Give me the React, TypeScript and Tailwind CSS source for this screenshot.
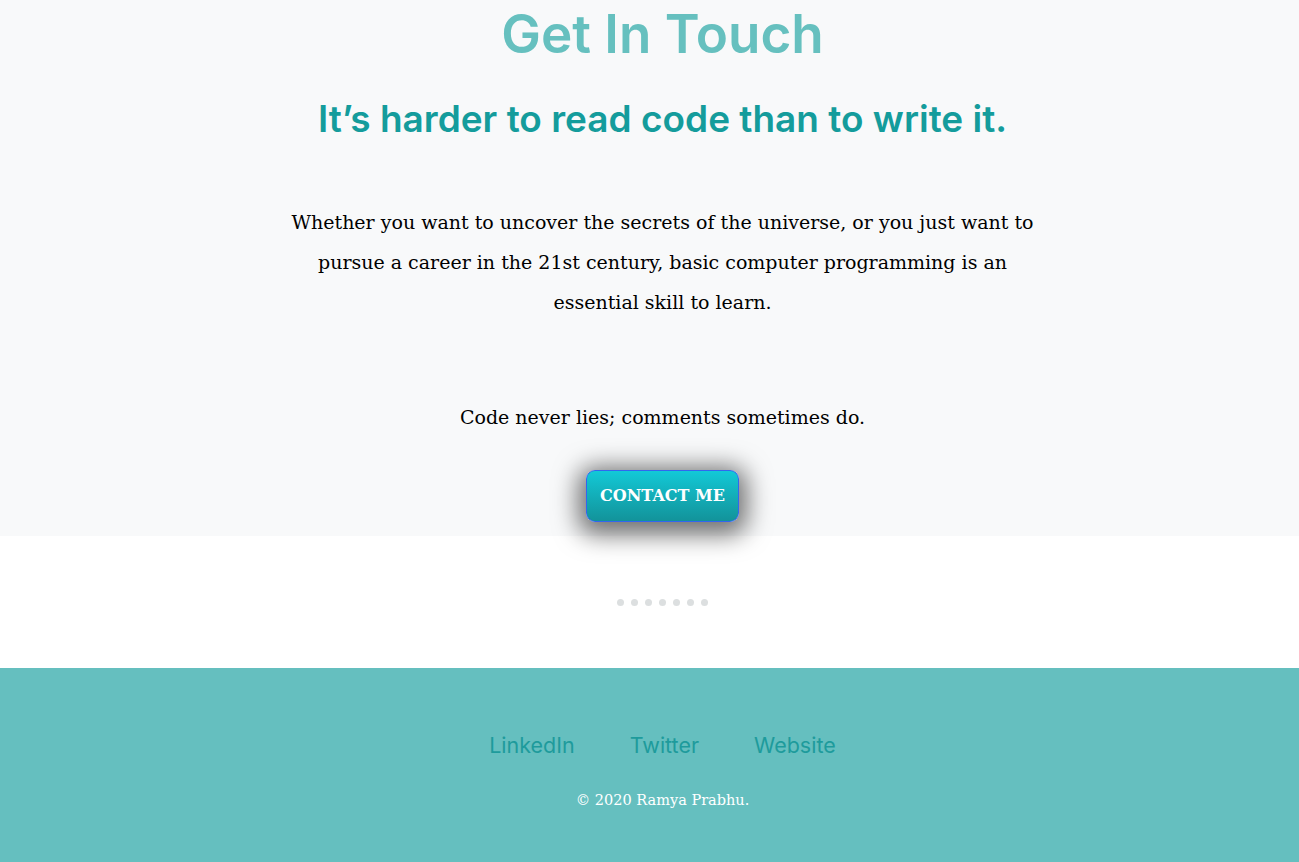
import React from "react";

export default function App() {
  return (
    <div className="w-full min-h-[862px] bg-white">
      <section className="bg-[#f8f9fa] h-[536px] flex flex-col items-center pl-[26px]">
        <h1 className="mt-[2px] font-['Inter','Open_Sans',sans-serif] text-[53px] leading-[64px] font-semibold text-[#66c0bf]">
          Get In Touch
        </h1>
        <h2 className="mt-[31px] font-['Inter','Open_Sans',sans-serif] text-[37px] leading-[44px] font-semibold text-[#149c9c]">
          It’s harder to read code than to write it.
        </h2>
        <p className="mt-[61px] w-[780px] text-center font-['DejaVu_Serif','Liberation_Serif',serif] text-[19px] leading-[40px] text-black">
          Whether you want to uncover the secrets of the universe, or you just want to pursue a career in the 21st century, basic computer programming is an essential skill to learn.
        </p>
        <p className="mt-[75px] text-center font-['DejaVu_Serif','Liberation_Serif',serif] text-[19px] leading-[40px] text-black">
          Code never lies; comments sometimes do.
        </p>
        <button className="mt-[33px] w-[153px] h-[52px] rounded-[9px] border border-[#3366ee] bg-gradient-to-b from-[#12c9d7] to-[#12939a] font-['DejaVu_Serif','Liberation_Serif',serif] text-white text-[16px] font-bold shadow-[0_5px_24px_8px_rgba(0,0,0,0.55)]">
          CONTACT ME
        </button>
      </section>
      <section className="h-[132px] flex items-center justify-center gap-[7px] pl-[26px]">
        {Array.from({ length: 7 }).map((_, i) => (
          <span key={i} className="w-[7px] h-[7px] rounded-full bg-[#dcdfe0]" />
        ))}
      </section>
      <footer className="bg-[#65bfbf] h-[194px] flex flex-col items-center pl-[26px]">
        <nav className="mt-[62px] flex gap-[55px] font-['Inter','Open_Sans',sans-serif] text-[21.5px] leading-[30px] text-[#1e9b9c]">
          <a>LinkedIn</a>
          <a>Twitter</a>
          <a>Website</a>
        </nav>
        <p className="mt-[30px] font-['DejaVu_Serif','Liberation_Serif',serif] text-[14.5px] text-white">
          © 2020 Ramya Prabhu.
        </p>
      </footer>
    </div>
  );
}
